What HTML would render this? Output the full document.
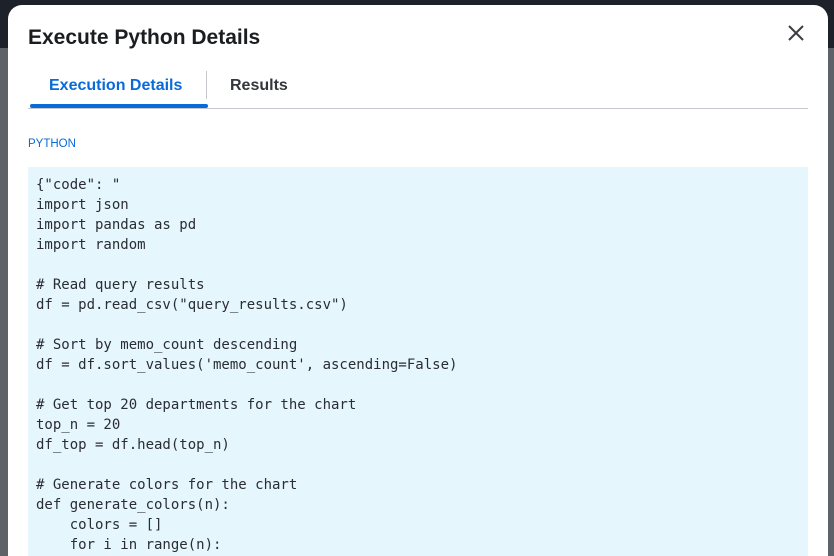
<!DOCTYPE html>
<html><head><style>
*{margin:0;padding:0;box-sizing:border-box}
html,body{width:834px;height:556px;overflow:hidden}
body{background:#5d6168;position:relative;font-family:"Liberation Sans",sans-serif}
.top{position:absolute;left:0;top:0;width:834px;height:48px;background:#1d2129}
.modal{position:absolute;left:8px;top:5px;width:820px;height:551px;background:#fff;border-radius:14px 14px 0 0;overflow:hidden}
h1{position:absolute;left:20px;top:21px;font-size:21px;font-weight:bold;color:#1b1d21}
.x{position:absolute;left:778px;top:18px}
.tabs{position:absolute;left:20px;top:103px;width:780px;height:1px;background:#c6c6cc}
.t1{position:absolute;left:41px;top:72px;font-size:16px;font-weight:bold;color:#0a6bd6}
.ul{position:absolute;left:22px;top:99px;width:178px;height:4px;background:#0a6bd6;border-radius:2px}
.sep{position:absolute;left:198px;top:66px;width:1px;height:28px;background:#c6c6cc}
.t2{position:absolute;left:222px;top:72px;font-size:16px;font-weight:bold;color:#33363b}
.lbl{position:absolute;left:20px;top:133px;font-size:11.5px;color:#0a6bd6}
.code{position:absolute;left:20px;top:162px;width:780px;height:400px;background:#e5f6fd;padding:8px 8px;font-family:"DejaVu Sans Mono",monospace;font-size:14px;line-height:20px;color:#2a2d31;white-space:pre}
</style></head><body>
<div class="top"></div>
<div class="modal">
<h1>Execute Python Details</h1>
<svg class="x" width="20" height="20" viewBox="0 0 20 20"><path d="M3 3L17 17M17 3L3 17" stroke="#3a3d42" stroke-width="2" fill="none"/></svg>
<div class="tabs"></div>
<div class="t1">Execution Details</div>
<div class="ul"></div>
<div class="sep"></div>
<div class="t2">Results</div>
<div class="lbl">PYTHON</div>
<div class="code">{"code": "
import json
import pandas as pd
import random

# Read query results
df = pd.read_csv("query_results.csv")

# Sort by memo_count descending
df = df.sort_values('memo_count', ascending=False)

# Get top 20 departments for the chart
top_n = 20
df_top = df.head(top_n)

# Generate colors for the chart
def generate_colors(n):
    colors = []
    for i in range(n):</div>
</div>
</body></html>
